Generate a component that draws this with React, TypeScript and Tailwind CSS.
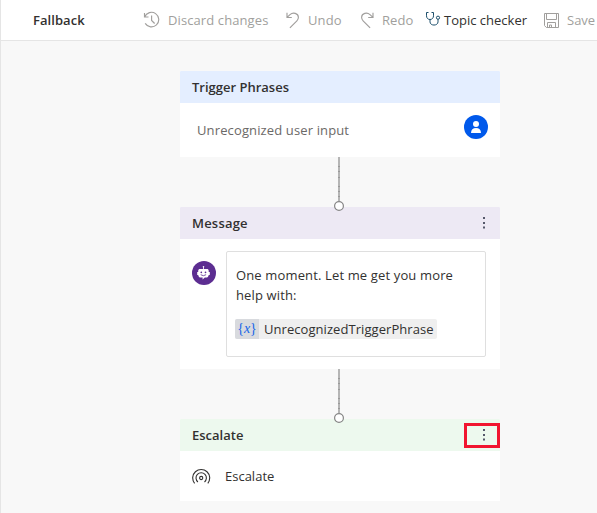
import type { ReactNode } from "react";

const stroke = { fill: "none", stroke: "currentColor", strokeWidth: 1 };

function HistoryIcon() {
  return (
    <svg width="18" height="18" viewBox="0 0 18 18" {...stroke} strokeWidth={1.15}>
      <path d="M1.500 2v4h4M1.700 5.800A7.300 7.300 0 1 1 2.200 12.400" />
      <path d="M8.600 4.500v5l3 3" />
    </svg>
  );
}

function UndoIcon() {
  return (
    <svg width="14" height="17" viewBox="0 0 14 17" {...stroke} strokeWidth={1.15}>
      <path d="M1 .8v4.700h4.800M1.300 5.200 4 2.600C7-.1 12.200 1.200 12.400 5.300c0 1.600-.6 2.600-1.500 3.500L3.900 15.900" />
    </svg>
  );
}

function StethoscopeIcon() {
  return (
    <svg width="15" height="15" viewBox="0 0 15 15" {...stroke}>
      <path d="M2.500 1.500h-2v3.300c0 2.200 1.400 3.700 3.500 3.700s3.500-1.500 3.500-3.700V1.500h-2M4 8.500v2.400c0 4.200 8 4.200 8 0V8.300" />
      <circle cx="12" cy="6.700" r="1.600" />
    </svg>
  );
}

function SaveIcon() {
  return (
    <svg width="15" height="15" viewBox="0 0 15 15" {...stroke}>
      <path d="M.5.500h14v14H2.400L.5 12.600zM2.500.5v6h10v-6M3.500 14.500v-5h8v5M5.500 14.500v-2.500h2v2.500" />
    </svg>
  );
}

function Dots() {
  return (
    <svg width="4" height="12" viewBox="0 0 4 12" fill="#55586a">
      <rect x="1" y="0" width="2" height="2" />
      <rect x="1" y="5" width="2" height="2" />
      <rect x="1" y="9.500" width="2" height="2" />
    </svg>
  );
}

function UserAvatar() {
  return (
    <svg width="24" height="24" viewBox="0 0 24 24">
      <circle cx="12" cy="12" r="12" fill="#0059eb" />
      <circle cx="12" cy="9" r="3" fill="#fff" />
      <path d="M7 18c0-3.300 2-5 5-5s5 1.700 5 5z" fill="#fff" />
    </svg>
  );
}

function BotAvatar() {
  return (
    <svg width="24" height="24" viewBox="0 0 24 24">
      <circle cx="12" cy="12" r="12" fill="#5c2d91" />
      <path d="M11.500 8.500V6" stroke="#fff" strokeWidth=".8" />
      <circle cx="11.500" cy="5.700" r=".8" fill="#fff" />
      <path d="M8 8h7c1 0 1.700.7 1.700 1.700V11h1.100v3h-1.100c-.2 1.700-1.200 2.600-2.700 2.600h-1.200l-2.200 2v-2H9c-1.700 0-2.600-.9-2.800-2.600H5.200v-3h1V9.700C6.200 8.700 7 8 8 8z" fill="#fff" />
      <circle cx="9.300" cy="11.300" r=".85" fill="#5c2d91" />
      <circle cx="13.500" cy="11.300" r=".85" fill="#5c2d91" />
      <path d="M8.700 13.700q2.700 2 5.400 0" fill="none" stroke="#5c2d91" strokeWidth=".8" />
    </svg>
  );
}

function EscalateIcon() {
  return (
    <svg className="-mt-px" width="19" height="16" viewBox="0 0 19 16" {...stroke} strokeWidth={1.1}>
      <path d="M2.600 15.300A8.500 8.500 0 1 1 15.800 15.300" />
      <path d="M5.900 14A5.200 5.200 0 1 1 12.500 14" />
      <circle cx="9.200" cy="10" r="1.600" />
    </svg>
  );
}

function Tool({ icon, children, className }: { icon: ReactNode; children: ReactNode; className: string }) {
  return (
    <button className={`flex shrink-0 items-center whitespace-nowrap ${className}`}>
      <span className="flex shrink-0">{icon}</span>
      <span className="pt-0.5">{children}</span>
    </button>
  );
}

function Connector() {
  return (
    <svg className="relative z-10 -mb-1 ml-[153px] block shrink-0" width="12" height="54" viewBox="0 0 12 54">
      <path d="M6 0v44" stroke="#b5b5b5" strokeWidth="2" />
      <path d="M6 9v1m0 4v1m0 5v1m0 8v1m0 4v1m0 4v1" stroke="#999" strokeWidth="2" />
      <circle cx="6" cy="49" r="4.400" fill="#fff" stroke="#858585" strokeWidth="1.200" />
    </svg>
  );
}

function CardHeader({ title, className, children }: { title: string; className: string; children?: ReactNode }) {
  return (
    <header className={`flex h-8 shrink-0 items-center justify-between rounded-t-[1px] pl-3 text-[13px] font-semibold text-[#323130] ${className}`}>
      <h2 className="pt-0.5">{title}</h2>
      {children}
    </header>
  );
}

export default function App() {
  return (
    <div className="h-[513px] w-[597px] overflow-hidden border-l border-[#e5e5e5] bg-[#f8f8f8] font-['Open_Sans','Noto_Sans',sans-serif] text-[13px] text-[#323130]">
      <nav className="flex h-[41px] items-center border-b border-[#e5e5e5] bg-white text-[#a19f9d]">
        <h1 className="ml-8 w-[110px] shrink-0 pt-0.5 text-[13px] font-semibold tracking-[0.05px] text-[#323130]">Fallback</h1>
        <Tool icon={<HistoryIcon />} className="w-[143px] gap-[7px] tracking-[0.1px]">Discard changes</Tool>
        <Tool icon={<UndoIcon />} className="w-[74px] gap-2 tracking-[0.1px]">Undo</Tool>
        <Tool icon={<span className="-scale-x-100"><UndoIcon /></span>} className="w-[66px] gap-2 tracking-[0.1px]">Redo</Tool>
        <Tool icon={<span className="-mt-1 text-[#1b4e6b]"><StethoscopeIcon /></span>} className="w-[118px] gap-[3px] text-[#323130]">Topic checker</Tool>
        <Tool icon={<SaveIcon />} className="gap-2">Save</Tool>
      </nav>
      <main className="ml-[179px] flex w-80 flex-col pt-[30px]">
        <section className="h-[86px] bg-white">
          <CardHeader title="Trigger Phrases" className="bg-[#e4eeff]" />
          <div className="flex h-12 items-center justify-between pr-3 pl-[17px] text-[#6b6967]">
            <span className="mt-2 tracking-[0.13px]">Unrecognized user input</span>
            <UserAvatar />
          </div>
        </section>
        <Connector />
        <section className="h-[162px] bg-white">
          <CardHeader title="Message" className="bg-[#ede9f4] pr-3.5 tracking-[0.2px]"><Dots /></CardHeader>
          <div className="flex gap-2.5 px-3 pt-3">
            <div className="mt-2.5"><BotAvatar /></div>
            <div className="mr-0.5 h-[106px] w-[260px] rounded-[2px] border border-[#dfdfdf] px-[9px] pt-[13px]">
              <p className="leading-5 tracking-[0.14px]">One moment. Let me get you more<br />help with:</p>
              <div className="-ml-px mt-3.5 flex h-5 w-[202px] items-center overflow-hidden rounded-[2px] bg-[#efefef]">
                <span className="flex h-5 w-6 shrink-0 items-center justify-center bg-[#d8dade] pb-0.5 font-['Liberation_Serif',serif] text-[14px] text-[#1464e8]">{"{"}<i>x</i>{"}"}</span>
                <span className="ml-[5px] pt-0.5 tracking-[0.06px]">UnrecognizedTriggerPhrase</span>
              </div>
            </div>
          </div>
        </section>
        <Connector />
        <section className="h-[82px] bg-white">
          <CardHeader title="Escalate" className="bg-[#edf9ee]">
            <button className="flex h-[25px] w-9 items-center justify-center border-3 border-[#f1152f] pl-1"><Dots /></button>
          </CardHeader>
          <div className="flex h-[50px] items-center gap-3.5 pl-3">
            <EscalateIcon />
            <span className="pt-0.5">Escalate</span>
          </div>
        </section>
      </main>
    </div>
  );
}
